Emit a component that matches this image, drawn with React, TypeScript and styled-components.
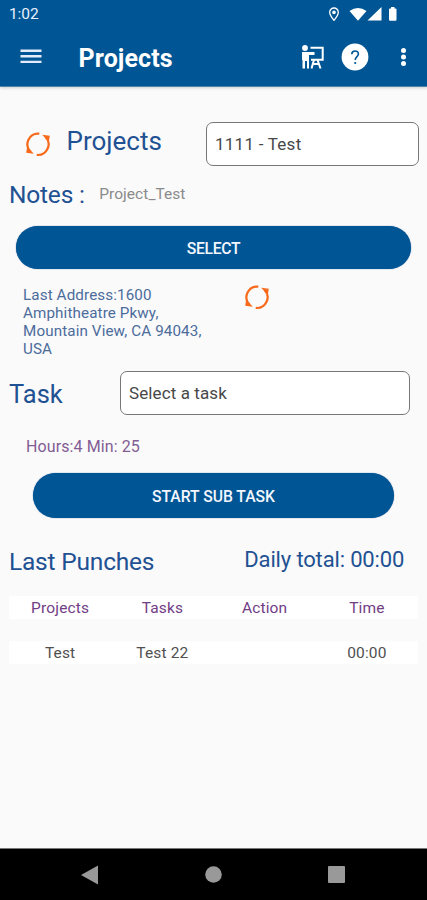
import React from "react";
import styled, { createGlobalStyle } from "styled-components";

const BLUE = "#005694";
const INK = "#1f5193";
const PURPLE = "#713d85";

const GlobalStyle = createGlobalStyle`
  * { box-sizing: border-box; }
  body { margin: 0; background: #fafafa; font-family: Roboto, sans-serif; }
`;

const Screen = styled.div`
  width: 427px;
  height: 900px;
  display: flex;
  flex-direction: column;
  background: #fafafa;
  overflow: hidden;
`;

const Header = styled.header`
  height: 87px;
  flex: none;
  background: ${BLUE};
  color: #fff;
  border-bottom: 1px solid #4c84b0;
  box-shadow: 0 1px 3px rgba(0, 0, 0, 0.18);
`;

const StatusBar = styled.div`
  height: 28px;
  padding: 0 28px 0 9px;
  display: flex;
  align-items: center;
  justify-content: space-between;
`;

const StatusIcons = styled.div`
  display: flex;
  align-items: center;
`;

const Toolbar = styled.div`
  height: 58px;
  padding: 0 19px 0 20px;
  display: flex;
  align-items: center;
`;

const ToolbarTitle = styled.h1`
  margin: 3px auto 0 36.5px;
  font-size: 25px;
  line-height: 30px;
  font-weight: 700;
  letter-spacing: 0.12px;
`;

const Actions = styled.div`
  display: flex;
  align-items: center;
`;

const Content = styled.main`
  flex: 1;
  display: flex;
  flex-direction: column;
`;

const Row = styled.div<{ $top: number; $height: number; $left?: number; $right?: number }>`
  margin-top: ${(p) => p.$top}px;
  height: ${(p) => p.$height}px;
  padding: 0 ${(p) => p.$right ?? 0}px 0 ${(p) => p.$left ?? 9}px;
  flex: none;
  display: flex;
  align-items: center;
`;

const Text = styled.span<{ $size: number; $color?: string; $spacing?: number; $left?: number; $lift?: number; $drop?: number }>`
  font-size: ${(p) => p.$size}px;
  line-height: 1.2;
  color: ${(p) => p.$color ?? INK};
  letter-spacing: ${(p) => p.$spacing ?? 0}px;
  margin-left: ${(p) => p.$left ?? 0}px;
  margin-top: ${(p) => p.$drop ?? 0}px;
  margin-bottom: ${(p) => p.$lift ?? 0}px;
  white-space: nowrap;
`;

const Field = styled.div<{ $width: number }>`
  width: ${(p) => p.$width}px;
  height: 44px;
  margin-left: auto;
  padding: 1px 8px 0;
  display: flex;
  align-items: center;
  border: 1px solid #777;
  border-radius: 7px;
  background: #fff;
`;

const PillButton = styled.button<{ $top: number; $inset: string; $height: number; $spacing: number }>`
  margin: ${(p) => p.$top}px ${(p) => p.$inset} 0;
  height: ${(p) => p.$height}px;
  flex: none;
  padding: 1px 0 0;
  border: 0;
  border-radius: 23px;
  background: ${BLUE};
  box-shadow: 0 0 1px #174a8c;
  color: #f4f7ff;
  font: 500 15.7px Roboto, sans-serif;
  letter-spacing: ${(p) => p.$spacing}px;
`;

const AddressRow = styled.div`
  margin: 16px 0 0 23px;
  display: flex;
  align-items: flex-start;
  height: 73px;
`;

const Address = styled.p`
  margin: 0;
  padding-top: 1px;
  width: 221px;
  font-size: 15.2px;
  line-height: 18px;
  letter-spacing: 0.12px;
  color: #4c6c9c;
  white-space: pre-line;
`;

const TableRow = styled.div<{ $top: number; $color: string }>`
  margin: ${(p) => p.$top}px 9px 0;
  height: 23px;
  display: grid;
  grid-template-columns: repeat(4, 1fr);
  align-items: center;
  text-align: center;
  background: #fff;
  color: ${(p) => p.$color};
  font-size: 15.5px;
  letter-spacing: 0.15px;
`;

const NavBar = styled.nav`
  height: 52px;
  flex: none;
  padding: 0 82px 0 81px;
  display: flex;
  align-items: center;
  justify-content: space-between;
  background: #000;
  border-top: 1px solid #777;
`;

const Refresh = () => (
  <svg width="26" height="25" viewBox="0 0 26 25" fill="none" stroke="#f76a1c" strokeWidth="2.2">
    <path d="M14.300 1.700A10.700 10.700 0 0 0 5.400 19.700" />
    <path d="M11.700 22.900A10.700 10.700 0 0 0 20.600 4.900" />
    <path d="M1.200 20.800 2.200 14.500 8.800 21.800ZM24.800 3.800 23.800 10.100 17.200 2.800Z" fill="#f76a1c" stroke="none" />
  </svg>
);

const StatusGlyphs = () => (
  <svg width="72" height="18" viewBox="0 0 72 18" fill="#fff">
    <path d="M7 3a4.3 4.3 0 0 0-4.3 4.3c0 3.1 4.3 8 4.3 8s4.3-4.9 4.3-8A4.3 4.3 0 0 0 7 3Z" fill="none" stroke="#fff" strokeWidth="1.3" />
    <circle cx="7" cy="7.4" r="1.8" />
    <path d="M22.5 6Q31 0 39.500 6L31 15.800Z" />
    <path d="M54.500 2V15.500H40.500Z" />
    <path d="M64 2h3.500v1.500h1q1 0 1 1v10.200q0 1-1 1h-5.500q-1 0-1-1V4.500q0-1 1-1H64Z" />
  </svg>
);

const Menu = () => (
  <svg width="22" height="18" viewBox="0 0 22 18" fill="none" stroke="#e4ebfa" strokeWidth="2.400">
    <path d="M.5 2.700h21M.5 8.300h21M.5 13.900h21" />
  </svg>
);

const Trainer = () => (
  <svg width="24" height="26" viewBox="0 0 24 26" fill="none" stroke="#fff" strokeWidth="2">
    <circle cx="5" cy="4" r="2.900" fill="#fff" stroke="none" />
    <path d="M2 8H14.500v3H9V24.500H7V17H5V24.500H2.500V16H2Z" fill="#fff" stroke="none" />
    <path d="M10.500 3.800H22.700V15.800H11" />
    <path d="M14 15.800 11.500 24.500M17.500 15.800 20.500 24.500M12.500 20H19" />
  </svg>
);

const Help = () => (
  <svg width="28" height="28" viewBox="0 0 28 28">
    <circle cx="14" cy="14" r="13.400" fill="#fff" />
    <path d="M10.800 11.300C10.800 6.900 17.400 7 17.400 11C17.400 13.700 14.200 13.700 14.200 17.100" fill="none" stroke={BLUE} strokeWidth="1.600" />
    <circle cx="14.200" cy="20" r="1.100" fill={BLUE} />
  </svg>
);

const More = () => (
  <svg width="8" height="20" viewBox="0 0 8 20" fill="#fff">
    <circle cx="3.500" cy="3.500" r="2.500" />
    <circle cx="3.500" cy="10" r="2.500" />
    <circle cx="3.500" cy="16.500" r="2.500" />
  </svg>
);

const IconSlot = styled.span<{ $left: number }>`
  display: flex;
  margin-left: ${(p) => p.$left}px;
`;

export default function App() {
  return (
    <Screen>
      <GlobalStyle />
      <Header>
        <StatusBar>
          <Text $size={15.5} $color="#e8f0ff" $spacing={-0.1}>1:02</Text>
          <StatusIcons><StatusGlyphs /></StatusIcons>
        </StatusBar>
        <Toolbar>
          <Menu />
          <ToolbarTitle>Projects</ToolbarTitle>
          <Actions>
            <IconSlot $left={0}><Trainer /></IconSlot>
            <IconSlot $left={17}><Help /></IconSlot>
            <IconSlot $left={31}><More /></IconSlot>
          </Actions>
        </Toolbar>
      </Header>
      <Content>
        <Row $top={35} $height={44} $left={25} $right={8}>
          <Refresh />
          <Text $size={26} $left={15.5} $lift={4}>Projects</Text>
          <Field $width={213}><Text $size={17} $spacing={0.25} $color="#484848">1111 - Test</Text></Field>
        </Row>
        <Row $top={13} $height={30}>
          <Text $size={24.5} $spacing={-0.2} $drop={1}>Notes :</Text>
          <Text $size={15.5} $color="#8a8a8a" $left={14.5} $spacing={0.05}>Project_Test</Text>
        </Row>
        <PillButton $top={17} $inset="16px" $height={43} $spacing={-0.3}>SELECT</PillButton>
        <AddressRow>
          <Address>{"Last Address:1600\nAmphitheatre Pkwy,\nMountain View, CA 94043,\nUSA"}</Address>
          <Refresh />
        </AddressRow>
        <Row $top={13} $height={44} $right={17}>
          <Text $size={25.5} $drop={3}>Task</Text>
          <Field $width={290}><Text $size={17} $spacing={0.1} $color="#484848">Select a task</Text></Field>
        </Row>
        <Row $top={20} $height={22} $left={26}>
          <Text $size={16} $color="#825d94" $spacing={0.1} $drop={2}>Hours:4 Min: 25</Text>
        </Row>
        <PillButton $top={16} $inset="33px" $height={45} $spacing={0}>START SUB TASK</PillButton>
        <Row $top={27} $height={32} $right={23}>
          <Text $size={24.5} $spacing={-0.2} $drop={1}>Last Punches</Text>
          <Text $size={22} $left={90} $lift={2} $spacing={-0.15}>Daily total: 00:00</Text>
        </Row>
        <TableRow $top={19} $color={PURPLE}>
          <span>Projects</span><span>Tasks</span><span>Action</span><span>Time</span>
        </TableRow>
        <TableRow $top={22} $color="#505050">
          <span>Test</span><span>Test 22</span><span /><span>00:00</span>
        </TableRow>
      </Content>
      <NavBar>
        <svg width="17" height="20" viewBox="0 0 17 20" fill="#999"><path d="M0 10 17 .5V19.500Z" /></svg>
        <svg width="17" height="17" viewBox="0 0 17 17" fill="#999"><circle cx="8.500" cy="8.500" r="8.300" /></svg>
        <svg width="17" height="17" viewBox="0 0 17 17" fill="#999"><rect width="17" height="17" rx="1" /></svg>
      </NavBar>
    </Screen>
  );
}
